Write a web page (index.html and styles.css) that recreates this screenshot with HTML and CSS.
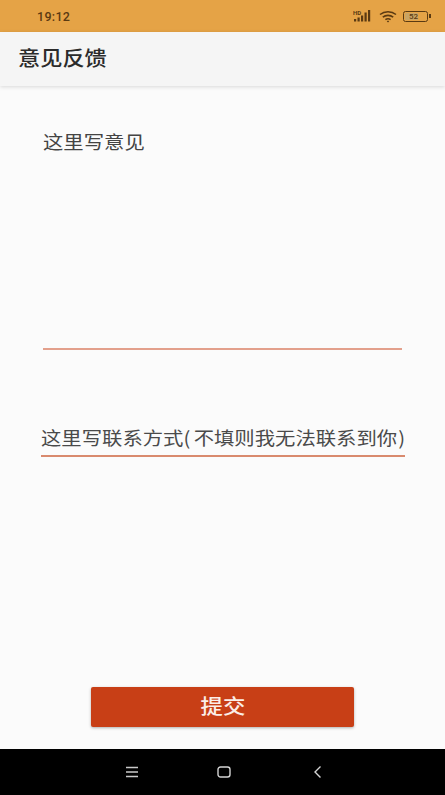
FILE: index.html
```html
<!DOCTYPE html>
<html lang="zh">
<head>
<meta charset="utf-8">
<title>意见反馈</title>
<link rel="stylesheet" href="styles.css">
</head>
<body>
<div class="screen">
  <header class="statusbar">
    <span class="time">19:12</span>
    <div class="status-icons">
      <svg class="sig" width="20" height="14" viewBox="0 0 20 14">
        <text x="0" y="6" class="hd">HD</text>
        <g fill="#5a3a12">
          <rect x="1" y="10" width="2.200" height="2.500"/>
          <rect x="4.500" y="8.500" width="2.200" height="4"/>
          <rect x="8" y="6.500" width="2.200" height="6"/>
          <rect x="11.500" y="3.500" width="2.200" height="9"/>
          <rect x="15" y="1" width="2.200" height="11.500"/>
        </g>
      </svg>
      <svg class="wifi" width="18" height="13" viewBox="0 0 18 13" fill="none" stroke="#5a3a12" stroke-width="1.600">
        <path d="M1 4.500C5.500 .8 12.500 .8 17 4.500"/>
        <path d="M3.800 7.200C6.800 4.800 11.200 4.800 14.200 7.200"/>
        <path d="M6.400 9.700C8 8.500 10 8.500 11.600 9.700"/>
        <path d="M9 12.500L7.800 11.200C8.500 10.700 9.500 10.700 10.200 11.200Z" fill="#5a3a12" stroke="none"/>
      </svg>
      <div class="battery">
        <div class="cell"><span class="level">52</span></div>
        <div class="nub"></div>
      </div>
    </div>
  </header>

  <div class="appbar"><h1>意见反馈</h1></div>

  <main class="content">
    <div class="field-a">
      <div class="text-a">这里写意见</div>
    </div>
    <div class="field-b">
      <div class="text-b">这里写联系方式<span class="open">(</span>不填则我无法联系到你<span class="close">)</span></div>
    </div>
    <div class="spacer"></div>
    <button class="submit" type="button"><span class="submit-label">提交</span></button>
  </main>

  <nav class="navbar">
    <svg width="14" height="12" viewBox="0 0 14 12" stroke="#c9c9c9" stroke-width="1.300" fill="none">
      <path d="M1 1.500H13M1 6H13M1 10.500H13"/>
    </svg>
    <svg width="14" height="12" viewBox="0 0 14 12" stroke="#d4d4d4" stroke-width="1.400" fill="none">
      <rect x="1" y="1" width="12" height="10" rx="2.500"/>
    </svg>
    <svg width="10" height="14" viewBox="0 0 10 14" stroke="#d4d4d4" stroke-width="1.400" fill="none">
      <path d="M7.500 1.500L2 7L7.500 12.500"/>
    </svg>
  </nav>
</div>
</body>
</html>
```

FILE: styles.css
```css
* { box-sizing: border-box; }
html, body { margin: 0; padding: 0; }
body {
  width: 445px;
  height: 795px;
  overflow: hidden;
  font-family: "Noto Sans CJK SC", "Noto Sans", sans-serif;
}
.screen {
  width: 445px;
  height: 795px;
  display: flex;
  flex-direction: column;
  background: #fbfbfb;
}
.statusbar {
  height: 32px;
  flex: none;
  background: #e5a346;
  display: flex;
  align-items: center;
  justify-content: space-between;
  padding: 0 14px 0 37px;
}
.time {
  font-family: "Roboto", sans-serif;
  font-size: 12.500px;
  font-weight: 500;
  color: #5a3a12;
  letter-spacing: .3px;
}
.status-icons { display: flex; align-items: center; gap: 6px; }
.hd { font: 700 6px "Roboto", sans-serif; fill: #5a3a12; }
.battery { display: flex; align-items: center; }
.cell {
  width: 25px;
  height: 11px;
  border: 1.300px solid #5a3a12;
  border-radius: 2.500px;
  padding: 1px;
  display: flex;
}
.level {
  width: 60%;
  font: 500 8px/7px "Roboto", sans-serif;
  color: #5a3a12;
  background: #c9a464;
  text-indent: 4px;
  white-space: nowrap;
}
.nub { width: 2px; height: 4px; background: #5a3a12; margin-left: 1px; }
.appbar {
  height: 54px;
  flex: none;
  background: #f5f5f5;
  display: flex;
  align-items: center;
  padding: 0 18px 3px;
  box-shadow: 0 1px 4px rgba(0,0,0,.14);
  position: relative;
}
.appbar h1 {
  margin: 0;
  font-size: 20px;
  font-weight: 500;
  color: #2b2b2b;
  transform: scaleX(1.110);
  transform-origin: left center;
}
.content {
  flex: 1;
  display: flex;
  flex-direction: column;
  align-items: center;
  padding-bottom: 21px;
  min-height: 0;
}
.field-a {
  width: 359px;
  height: 264px;
  border-bottom: 2px solid #e3a08c;
  padding-top: 42px;
}
.text-a {
  font-size: 18.500px;
  line-height: 26px;
  color: #444;
  transform: scaleX(1.100);
  transform-origin: left center;
}
.field-b {
  width: 364px;
  margin-top: 69px;
  height: 38px;
  border-bottom: 2px solid #d98a6e;
  overflow: hidden;
}
.text-b {
  font-size: 18.500px;
  line-height: 37px;
  color: #4a4a4a;
  white-space: nowrap;
  transform: scaleX(1.100);
  transform-origin: left center;
}
.open { margin: 0 3px 0 0; }
.close { margin-left: 1px; }
.spacer { flex: 1; }
.submit {
  width: 263px;
  height: 40px;
  margin-bottom: 1px;
  border: 0;
  border-radius: 2px;
  background: #c83f16;
  color: #fbeee8;
  font-family: inherit;
  font-size: 20px;
  font-weight: 500;
  padding: 0 0 3px;
  box-shadow: 0 1px 3px rgba(0,0,0,.3);
}
.submit-label {
  display: inline-block;
  transform: scaleX(1.120);
}
.navbar {
  height: 46px;
  flex: none;
  background: #000;
  display: grid;
  grid-template-columns: 92px 93px 94px;
  justify-content: center;
  justify-items: center;
  align-items: center;
  padding-left: 5px;
}
```
